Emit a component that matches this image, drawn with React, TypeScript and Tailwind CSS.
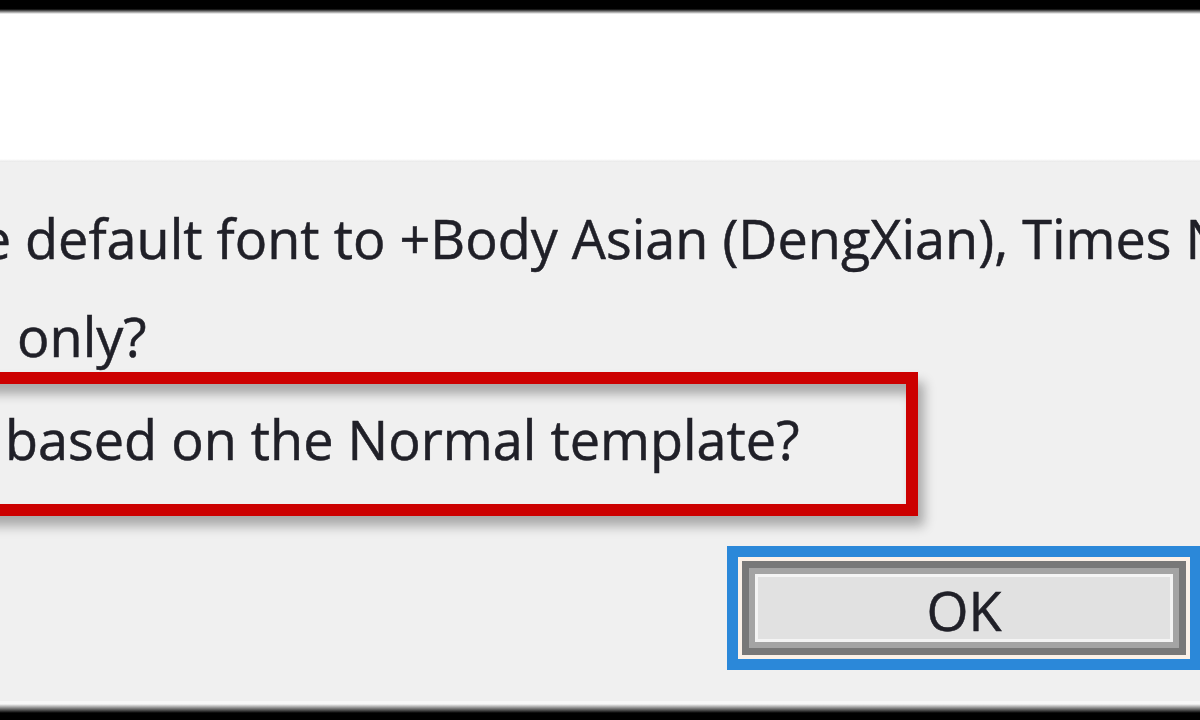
import React from "react";

const font = { fontFamily: '"Open Sans", "Noto Sans", sans-serif' };

function Line({ prefix, clip, text, className = "", textClass = "" }: { prefix: string; clip: string; text: string; className?: string; textClass?: string }) {
  return (
    <div className={"flex whitespace-nowrap h-[64px] leading-[64px] " + className}>
      <span className={"flex justify-end overflow-hidden shrink-0 " + clip}>
        <span className="shrink-0 whitespace-pre">{prefix}</span>
      </span>
      <span className={"whitespace-pre " + textClass}>{text}</span>
    </div>
  );
}

export default function App() {
  return (
    <div
      className="w-[1200px] h-[720px] overflow-hidden flex flex-col bg-black text-[54px] text-[#202028] blur-[0.7px] [-webkit-text-stroke:0.5px_#202028]"
      style={font}
    >
      <div className="h-[162px] shrink-0 bg-[linear-gradient(to_bottom,#000_0px,#000_9px,#fff_14px,#fff_159px,#e8e8e8_162px)]" />
      <div className="flex-1 bg-[#f0f0f0] flex flex-col pt-[44px]">
        <Line prefix="Do you want to set the" clip="w-[11px]" text=" default font to +Body Asian (DengXian), Times New Roman, 10.5 pt?" />
        <Line prefix="This document" clip="w-[0px]" text=" only?" textClass="pl-[3px]" className="mt-[34px]" />
        <div className="mt-[4px] ml-[-40px] w-[958px] h-[144px] shrink-0 border-[12px] border-[#cc0000] pt-[23px] shadow-[6px_10px_11px_rgba(0,0,0,0.3),inset_6px_10px_11px_rgba(0,0,0,0.3)]">
          <Line prefix="All documents " clip="w-[33px]" text="based on the Normal template?" />
        </div>
        <div className="mt-[30px] ml-[727px] w-[474px] h-[124px] shrink-0 border-[11px] border-[#2b88d9] bg-[#fbf1e8] p-[4px]">
          <div className="h-full border-[7px] border-[#787878]">
            <div className="h-full border-[6px] border-[#a4a4a4]">
              <div className="h-full border-[3px] border-[#f4f4f4] bg-[#e1e1e1] flex items-center justify-center leading-none pt-[4px]">
                OK
              </div>
            </div>
          </div>
        </div>
      </div>
      <div className="h-[19px] shrink-0 bg-[linear-gradient(to_bottom,#f8f8f8_0px,#f8f8f8_3px,#000_12px,#000_19px)]" />
    </div>
  );
}
